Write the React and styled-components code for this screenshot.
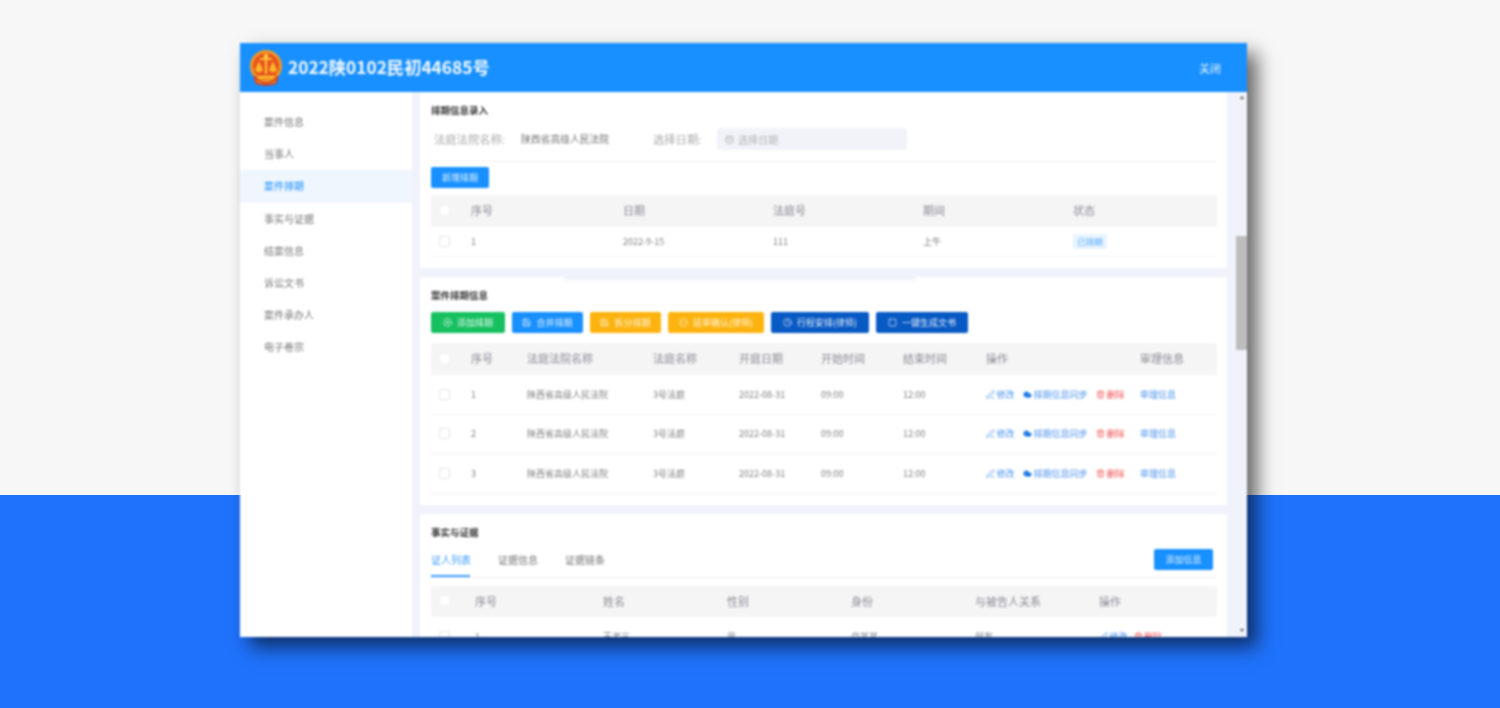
import React from "react";
import styled, { createGlobalStyle } from "styled-components";
import { CirclePlus, Save, CircleCheck, Clock, Square, PenLine, Cloud, Trash2, CalendarDays } from "lucide-react";

const Global = createGlobalStyle`
  html, body { margin: 0; padding: 0; height: 708px; overflow: hidden; }
  body { font-family: "Noto Sans CJK SC", "Noto Sans", sans-serif; }
  * { box-sizing: border-box; }
`;

const Page = styled.div`
  width: 1500px; height: 708px; padding: 43px 0 0 240px;
  background: linear-gradient(#f7f7f7 495px, #1f72fb 495px);
`;
const Window = styled.div`
  width: 1007px; height: 594px; display: flex; flex-direction: column;
  background: #fff; overflow: hidden;
  box-shadow: 10px 10px 18px rgba(0,0,0,.6);
  filter: blur(0.8px);
`;
const Header = styled.header`
  height: 49px; flex: none; background: #1890ff; color: #fff;
  display: flex; align-items: center; padding: 0 26px 0 10px;
`;
const Title = styled.h1`
  margin: -2px 0 0 6px; font-size: 17.3px; line-height: 24px; font-weight: 700; color: #f2f8ff;
  flex: 1; font-family: "Noto Sans CJK SC", sans-serif;
`;
const Close = styled.span`font-size: 11px; color: #eef6ff;`;
const Body = styled.div`flex: 1; min-height: 0; display: flex;`;
const Side = styled.nav`width: 172px; flex: none; padding-top: 14px; background: #fff;`;
const SideItem = styled.div`
  height: 32.2px; line-height: 32px; padding-left: 24px; font-size: 10px;
  color: ${p => (p.$active ? "#1890ff" : "#777")};
  background: ${p => (p.$active ? "#f0f6fe" : "transparent")};
`;
const Content = styled.main`
  width: 824px; flex: none; background: #f0f3fb; padding: 0 9px 0 8px;
  display: flex; flex-direction: column; gap: 9px; overflow: hidden;
`;
const Card = styled.section`
  position: relative; flex: none; height: ${p => p.$h}px; background: #fff;
  padding: ${p => p.$pt}px 10px 0 11px; overflow: hidden;
`;
const Glow = styled.div`
  position: absolute; top: -6px; left: 145px; width: 350px; height: 7px;
  background: #e8ecf8; box-shadow: 0 1px 5px #e8ecf8;
`;
const CardTitle = styled.h2`margin: 0; font-size: 9.5px; line-height: 14px; font-weight: 700; color: #333;`;
const FormRow = styled.div`
  height: 40px; margin-top: 5px; padding: 0 3px 5px; border-bottom: 1px solid #f0f0f0;
  display: flex; align-items: center;
`;
const Label = styled.span`font-size: 11.3px; color: #aaa; width: ${p => p.$w}px; flex: none;`;
const Value = styled.span`font-size: 9.8px; color: #777; width: 132px; flex: none;`;
const DateInput = styled.div`
  width: 190px; height: 22px; background: #f1f3f8; color: #b3b3b3; font-size: 10px;
  display: flex; align-items: center; gap: 4px; padding-left: 8px; border-radius: 2px;
`;
const Btn = styled.button`
  height: 21px; width: ${p => p.$w}px; flex: none; border: 0; border-radius: 2px; padding: 0;
  background: ${p => p.$bg || "#1890ff"}; color: rgba(255,255,255,.88); font: 9px "Noto Sans CJK SC", sans-serif;
  display: flex; align-items: center; justify-content: center; gap: 5px;
`;
const AddBtn = styled(Btn)`margin-top: 5px;`;
const BtnBar = styled.div`display: flex; gap: 7px; margin-top: 10px;`;
const Head = styled.div`
  height: ${p => p.$h || 32}px; margin-top: ${p => p.$mt}px; padding-bottom: 2px; background: #f5f5f5; display: grid; align-items: center;
  grid-template-columns: ${p => p.$cols}; font-size: 11px; color: #8a8a96;
`;
const Row = styled.div`
  height: ${p => p.$h}px; display: grid; align-items: center; grid-template-columns: ${p => p.$cols};
  font-size: 9px; color: #808080; border-bottom: 1px solid #f2f2f2;
`;
const Check = styled.i`
  display: block; width: 11px; height: 11px; margin-left: 8px; border-radius: 2px;
  background: ${p => (p.$head ? "#fff" : "transparent")}; border: 1px solid ${p => (p.$head ? "#f0f0f0" : "#e4e4e4")};
`;
const Tag = styled.span`
  display: inline-block; width: 34px; height: 15px; line-height: 15px; text-align: center; font-size: 8.5px;
  color: #4da6ff; background: #e8f4ff; border-radius: 2px;
`;
const Actions = styled.div`display: flex; align-items: center; gap: ${p => p.$gap || 8.5}px;`;
const Act = styled.span`
  display: inline-flex; align-items: center; gap: 1.5px; font-size: 9px; white-space: nowrap;
  color: ${p => (p.$red ? "#f0504f" : "#4b93ee")};
`;
const Tabs = styled.div`
  display: flex; align-items: flex-end; margin-top: 9px; height: 30px; border-bottom: 1px solid #eef0f4;
`;
const Tab = styled.span`
  font-size: 10px; color: ${p => (p.$active ? "#3f9dfb" : "#777")}; height: 30px; line-height: 26px; margin-right: 28px;
  border-bottom: ${p => (p.$active ? "2px solid #3f9dfb" : "none")}; width: 39px; white-space: nowrap;
`;
const TabBtn = styled(Btn)`margin-left: auto; margin-right: 4px; margin-bottom: 7px; width: 59px;`;
const Track = styled.div`width: 11px; flex: none; background: #f0f3fa; display: flex; flex-direction: column; align-items: center;`;
const Arrow = styled.span`
  width: 0; height: 0; margin-top: ${p => p.$mt}px; border-left: 2.5px solid transparent; border-right: 2.5px solid transparent;
  ${p => (p.$up ? "border-bottom: 3px solid #555;" : "border-top: 3px solid #555;")}
`;
const Thumb = styled.div`width: 11px; height: 114px; margin-top: 137px; background: #bdbdbd;`;

const Emblem = () => (
  <svg width="32" height="36" viewBox="0 0 32 36">
    <circle cx="16" cy="16" r="15" fill="#e8501e" />
    <circle cx="16" cy="16" r="14.5" fill="none" stroke="#f59a1f" strokeWidth="3" />
    <path d="M4 26 Q16 40 28 26 L26 33 Q16 37 6 33Z" fill="#e9911d" stroke="#d9381e" strokeWidth="1.5" />
    <path d="M16 4v20M10 9h12" stroke="#fbc42f" strokeWidth="2.2" />
    <path d="M9 11l-4 9a4.5 4.5 0 0 0 8 0zM23 11l-4 9a4.5 4.5 0 0 0 8 0z" fill="#f9b72b" />
    <path d="M8 27h16" stroke="#fbc42f" strokeWidth="2.4" />
    <circle cx="16" cy="6" r="2.2" fill="#ffd24a" />
  </svg>
);

const sideItems = ["案件信息", "当事人", "案件排期", "事实与证据", "结案信息", "诉讼文书", "案件承办人", "电子卷宗"];
const c1 = "40px 152px 150px 150px 150px 1fr";
const c2 = "40px 56px 126px 86px 82px 82px 83px 154px 1fr";
const c3 = "44px 128px 124px 124px 124px 124px 1fr";
const I = { size: 9, strokeWidth: 2 };

const EditAct = () => <Act><PenLine {...I} />修改</Act>;
const DelAct = () => <Act $red><Trash2 {...I} />删除</Act>;

export default function App() {
  return (
    <Page>
      <Global />
      <Window>
        <Header>
          <Emblem />
          <Title>2022陕0102民初44685号</Title>
          <Close>关闭</Close>
        </Header>
        <Body>
          <Side>
            {sideItems.map(s => <SideItem key={s} $active={s === "案件排期"}>{s}</SideItem>)}
          </Side>
          <Content>
            <Card $h={176} $pt={11}>
              <CardTitle>排期信息录入</CardTitle>
              <FormRow>
                <Label $w={87}>法庭法院名称:</Label>
                <Value>陕西省高级人民法院</Value>
                <Label $w={64}>选择日期:</Label>
                <DateInput><CalendarDays size={9} />选择日期</DateInput>
              </FormRow>
              <AddBtn $w={58}>新增排期</AddBtn>
              <Head $mt={7} $cols={c1}>
                <Check $head /><span>序号</span><span>日期</span><span>法庭号</span><span>期间</span><span>状态</span>
              </Head>
              <Row $h={30} $cols={c1}>
                <Check /><span>1</span><span>2022-9-15</span><span>111</span><span>上午</span><span><Tag>已排期</Tag></span>
              </Row>
            </Card>
            <Card $h={228} $pt={11}>
              <Glow />
              <CardTitle>案件排期信息</CardTitle>
              <BtnBar>
                <Btn $w={74} $bg="#16c060"><CirclePlus {...I} />添加排期</Btn>
                <Btn $w={71}><Save {...I} />合并排期</Btn>
                <Btn $w={71} $bg="#fdb30f"><Save {...I} />拆分排期</Btn>
                <Btn $w={96} $bg="#fdb30f"><CircleCheck {...I} />延审确认(律师)</Btn>
                <Btn $w={98} $bg="#0759c4"><Clock {...I} />行程安排(律师)</Btn>
                <Btn $w={92} $bg="#0759c4"><Square {...I} />一键生成文书</Btn>
              </BtnBar>
              <Head $mt={10} $cols={c2}>
                <Check $head /><span>序号</span><span>法庭法院名称</span><span>法庭名称</span><span>开庭日期</span><span>开始时间</span><span>结束时间</span><span>操作</span><span>审理信息</span>
              </Head>
              {[1, 2, 3].map(n => (
                <Row key={n} $h={39.6} $cols={c2}>
                  <Check /><span>{n}</span><span>陕西省高级人民法院</span><span>3号法庭</span><span>2022-08-31</span><span>09:00</span><span>12:00</span>
                  <Actions>
                    <EditAct />
                    <Act><Cloud size={9} fill="#1f78e6" color="#1f78e6" />排期信息同步</Act>
                    <DelAct />
                  </Actions>
                  <Act>审理信息</Act>
                </Row>
              ))}
            </Card>
            <Card $h={140} $pt={11}>
              <CardTitle>事实与证据</CardTitle>
              <Tabs>
                <Tab $active>证人列表</Tab><Tab>证据信息</Tab><Tab>证据链条</Tab>
                <TabBtn>添加信息</TabBtn>
              </Tabs>
              <Head $mt={8} $h={31} $cols={c3}>
                <Check $head /><span>序号</span><span>姓名</span><span>性别</span><span>身份</span><span>与被告人关系</span><span>操作</span>
              </Head>
              <Row $h={40} $cols={c3}>
                <Check /><span>1</span><span>王老三</span><span>男</span><span>自某某</span><span>朋友</span>
                <Actions $gap={6}><EditAct /><DelAct /></Actions>
              </Row>
            </Card>
          </Content>
          <Track>
            <Arrow $up $mt={4} />
            <Thumb />
            <Arrow $mt={279} />
          </Track>
        </Body>
      </Window>
    </Page>
  );
}
